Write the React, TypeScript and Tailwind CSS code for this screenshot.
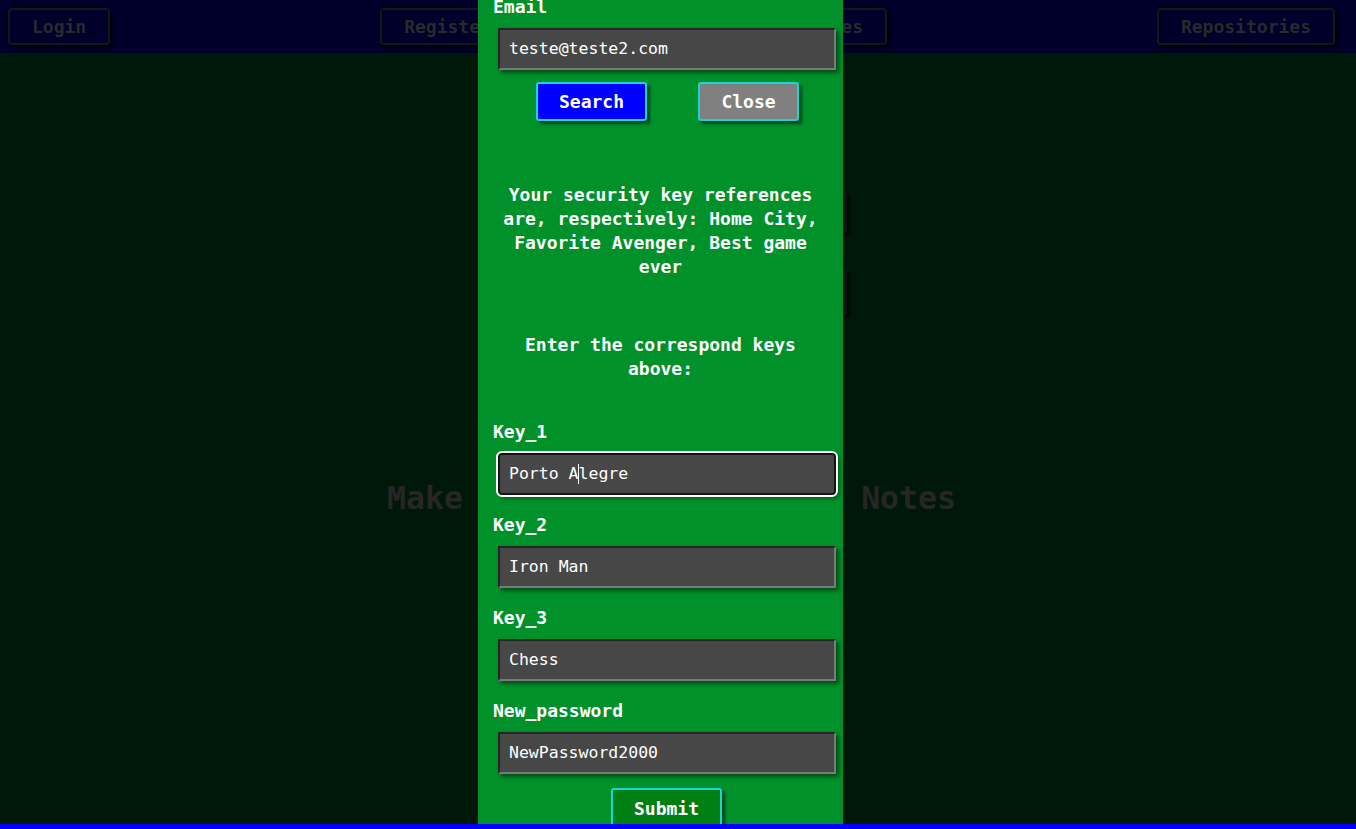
import React from 'react';

const mono = "font-['DejaVu_Sans_Mono',monospace]";

function NavButton({ label }: { label: string }) {
  return (
    <button className="h-[37px] px-[22px] rounded-[4px] border-2 border-[#161616] text-[18px] font-bold text-[#2a2a2a] shadow-[3px_3px_3px_rgba(0,0,0,0.6)]">
      {label}
    </button>
  );
}

function Field({ label, value, focused, caretAt }: { label: string; value: string; focused?: boolean; caretAt?: number }) {
  const before = caretAt !== undefined ? value.slice(0, caretAt) : value;
  const after = caretAt !== undefined ? value.slice(caretAt) : '';
  return (
    <div>
      <div className="ml-[15px] h-[24px] leading-[24px] text-[18px] font-bold text-white">{label}</div>
      <div
        className={
          'ml-[20px] mt-[9px] w-[338px] h-[42px] flex items-center pl-[9px] bg-[#474747] text-[16.5px] text-white whitespace-pre shadow-[3px_3px_4px_rgba(0,0,0,0.45)] ' +
          (focused
            ? 'border-2 border-[#141414] outline-2 outline-white [outline-style:solid] rounded-[4px]'
            : 'border-2 border-t-[#262626] border-l-[#262626] border-r-[#7a7a7a] border-b-[#7a7a7a]')
        }
      >
        {before}
        {caretAt !== undefined && <span className="inline-block w-px h-[20px] bg-white -mx-[0.5px]" />}
        {after}
      </div>
    </div>
  );
}

export default function App() {
  return (
    <div className={`relative w-[1356px] h-[829px] overflow-hidden flex flex-col ${mono}`}>
      {/* page behind the overlay */}
      <nav className="h-[53px] bg-[#00002a] flex items-center justify-between pl-[8px] pr-[21px] shrink-0">
        <NavButton label="Login" />
        <NavButton label="Register" />
        <NavButton label="Notes" />
        <NavButton label="Repositories" />
      </nav>
      <main className="flex-1 bg-[#00180a] flex flex-col items-center">
        <div className="mt-[139px] w-[338px] h-[41px] border-2 border-[#131313] shadow-[3px_3px_4px_rgba(0,0,0,0.6)]" />
        <div className="mt-[37px] w-[338px] h-[45px] border-2 border-[#131313] shadow-[3px_3px_4px_rgba(0,0,0,0.6)]" />
        <h1 className="mt-[163px] mr-[13px] text-[31.5px] leading-[40px] font-bold text-[#262626] whitespace-pre">Make and store your best Notes</h1>
      </main>
      <footer className="h-[5px] bg-[#0000ff] shrink-0" />

      {/* modal */}
      <div className="absolute left-[478px] top-0 w-[365px] h-[824px] bg-[#00912b] overflow-hidden">
        <div className="-mt-[5px]">
          <Field label="Email" value="teste@teste2.com" />
          <div className="mt-[12px] ml-[58px] flex gap-[51px]">
            <button className="w-[111px] h-[39px] rounded-[3px] border-2 border-[#19d6d6] bg-[#0000ff] text-white text-[18px] font-bold shadow-[3px_3px_3px_rgba(0,0,0,0.5)]">
              Search
            </button>
            <button className="w-[101px] h-[39px] rounded-[3px] border-2 border-[#19d6d6] bg-[#808080] text-white text-[18px] font-bold shadow-[3px_3px_3px_rgba(0,0,0,0.5)]">
              Close
            </button>
          </div>
          <p className="mt-[62px] px-[10px] text-center text-[18px] leading-[24px] font-bold text-white">
            Your security key references are, respectively: Home City, Favorite Avenger, Best game ever
          </p>
          <p className="mt-[54px] px-[10px] text-center text-[18px] leading-[24px] font-bold text-white">
            Enter the correspond keys above:
          </p>
          <div className="mt-[39px] flex flex-col gap-[18px]">
            <Field label="Key_1" value="Porto Alegre" focused caretAt={7} />
            <Field label="Key_2" value="Iron Man" />
            <Field label="Key_3" value="Chess" />
            <Field label="New_password" value="NewPassword2000" />
          </div>
          <div className="mt-[14px] flex justify-center pl-[12px]">
            <button className="w-[111px] h-[40px] rounded-[3px] border-2 border-[#19d6d6] bg-[#008012] text-white text-[18px] font-bold shadow-[3px_3px_3px_rgba(0,0,0,0.5)]">
              Submit
            </button>
          </div>
        </div>
      </div>
    </div>
  );
}
